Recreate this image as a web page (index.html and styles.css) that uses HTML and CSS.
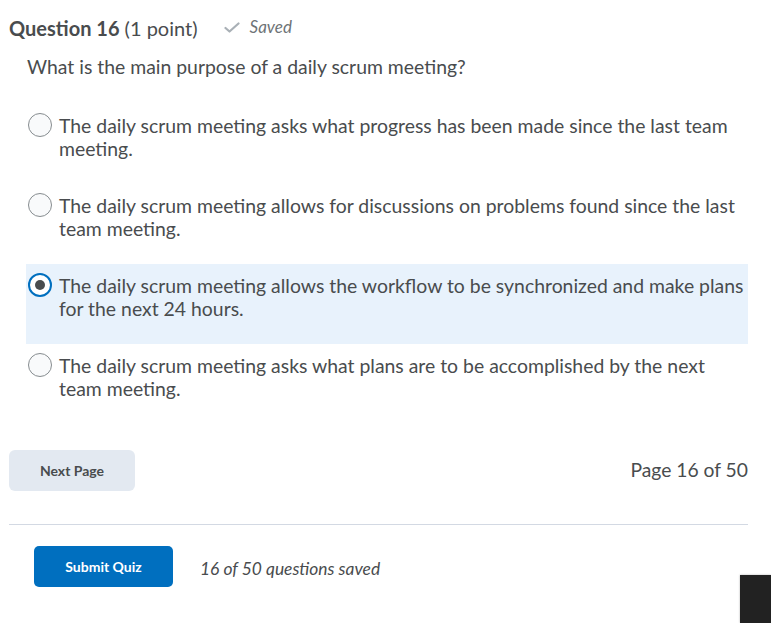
FILE: index.html
```html
<!DOCTYPE html>
<html>
<head>
<meta charset="utf-8">
<link rel="stylesheet" href="styles.css">
</head>
<body>
<div class="page">
  <div class="qhead">
    <h2 class="qtitle"><strong>Question 16</strong> (1 point)</h2>
    <span class="saved">
      <svg class="check" width="16" height="11" viewBox="0 0 16 11"><path d="M1.5 6 L5.5 9.5 L14.5 1.5" fill="none" stroke="#a9b0b6" stroke-width="2.2" stroke-linecap="round" stroke-linejoin="round"/></svg>
      <em>Saved</em>
    </span>
  </div>
  <p class="qtext">What is the main purpose of a daily scrum meeting?</p>
  <div class="options">
    <label class="opt"><span class="radio"></span><span class="otext">The daily scrum meeting asks what progress has been made since the last team meeting.</span></label>
    <label class="opt"><span class="radio"></span><span class="otext">The daily scrum meeting allows for discussions on problems found since the last team meeting.</span></label>
    <label class="opt selected"><span class="radio checked"></span><span class="otext">The daily scrum meeting allows the workflow to be synchronized and make plans for the next 24 hours.</span></label>
    <label class="opt"><span class="radio"></span><span class="otext">The daily scrum meeting asks what plans are to be accomplished by the next team meeting.</span></label>
  </div>
  <div class="nav">
    <button class="btn-next">Next Page</button>
    <span class="pageinfo">Page 16 of 50</span>
  </div>
  <hr class="divider">
  <div class="submit-row">
    <button class="btn-submit">Submit Quiz</button>
    <em class="savedcount">16 of 50 questions saved</em>
  </div>
</div>
<div class="corner"></div>
</body>
</html>
```
FILE: styles.css
```css
html, body {
  margin: 0;
  padding: 0;
  background: #fff;
}
body {
  font-family: Lato, "Liberation Sans", sans-serif;
  color: #494c4e;
  overflow: hidden;
  height: 623px;
  position: relative;
}
.page {
  width: 739px;
  padding: 15px 0 0 9px;
}
.qhead {
  display: flex;
  align-items: center;
  gap: 26px;
  height: 26px;
}
.qtitle {
  margin: 0;
  font-size: 20px;
  font-weight: 400;
  color: #494c4e;
}
.qtitle strong { font-weight: 700; }
.saved {
  display: flex;
  align-items: center;
  gap: 10px;
  font-size: 17px;
  color: #6e7376;
  margin-top: -3px;
}
.check { margin-top: 2px; }
.qtext {
  margin: 13.5px 0 0 18px;
  font-size: 19.4px;
  line-height: 23px;
}
.options {
  margin: 26.5px 0 0 17px;
  display: flex;
  flex-direction: column;
}
.opt {
  display: flex;
  align-items: flex-start;
  padding: 10px 3px 0 2px;
  height: 80px;
  box-sizing: border-box;
  font-size: 19.4px;
  line-height: 23px;
}
.opt.selected {
  background: #e8f2fc;
}
.radio {
  flex: none;
  width: 24px;
  height: 24px;
  box-sizing: border-box;
  border: 1.5px solid #868c8f;
  border-radius: 50%;
  background: #f9fafb;
  margin: -1px 7px 0 0;
  position: relative;
}
.radio.checked {
  border: 2px solid #006fbf;
  background: #fff;
}
.radio.checked::after {
  content: "";
  position: absolute;
  left: 5px;
  top: 5px;
  width: 10px;
  height: 10px;
  border-radius: 50%;
  background: #494c4e;
}
.otext { display: block; }
.nav {
  margin-top: 26px;
  display: flex;
  justify-content: space-between;
  align-items: center;
}
.btn-next {
  width: 126px;
  height: 41px;
  border: none;
  border-radius: 6px;
  background: #e3e9f1;
  color: #494c4e;
  font-family: Lato, "Liberation Sans", sans-serif;
  font-weight: 700;
  font-size: 14px;
}
.pageinfo {
  font-size: 19.3px;
  margin-top: -3px;
}
.divider {
  margin: 33px 0 0 0;
  border: none;
  border-top: 1px solid #d3d9e3;
}
.submit-row {
  display: flex;
  align-items: center;
  gap: 27px;
  margin: 21px 0 0 25px;
}
.btn-submit {
  width: 139px;
  height: 41px;
  border: none;
  border-radius: 5px;
  background: #006fbf;
  color: #fff;
  font-family: Lato, "Liberation Sans", sans-serif;
  font-weight: 700;
  font-size: 14px;
}
.savedcount {
  font-size: 17.4px;
  color: #494c4e;
  margin-top: 4px;
}
.corner {
  position: absolute;
  left: 740px;
  top: 575px;
  width: 31px;
  height: 48px;
  background: #222;
  box-shadow: 0 0 2px rgba(0,0,0,0.3);
}
```
